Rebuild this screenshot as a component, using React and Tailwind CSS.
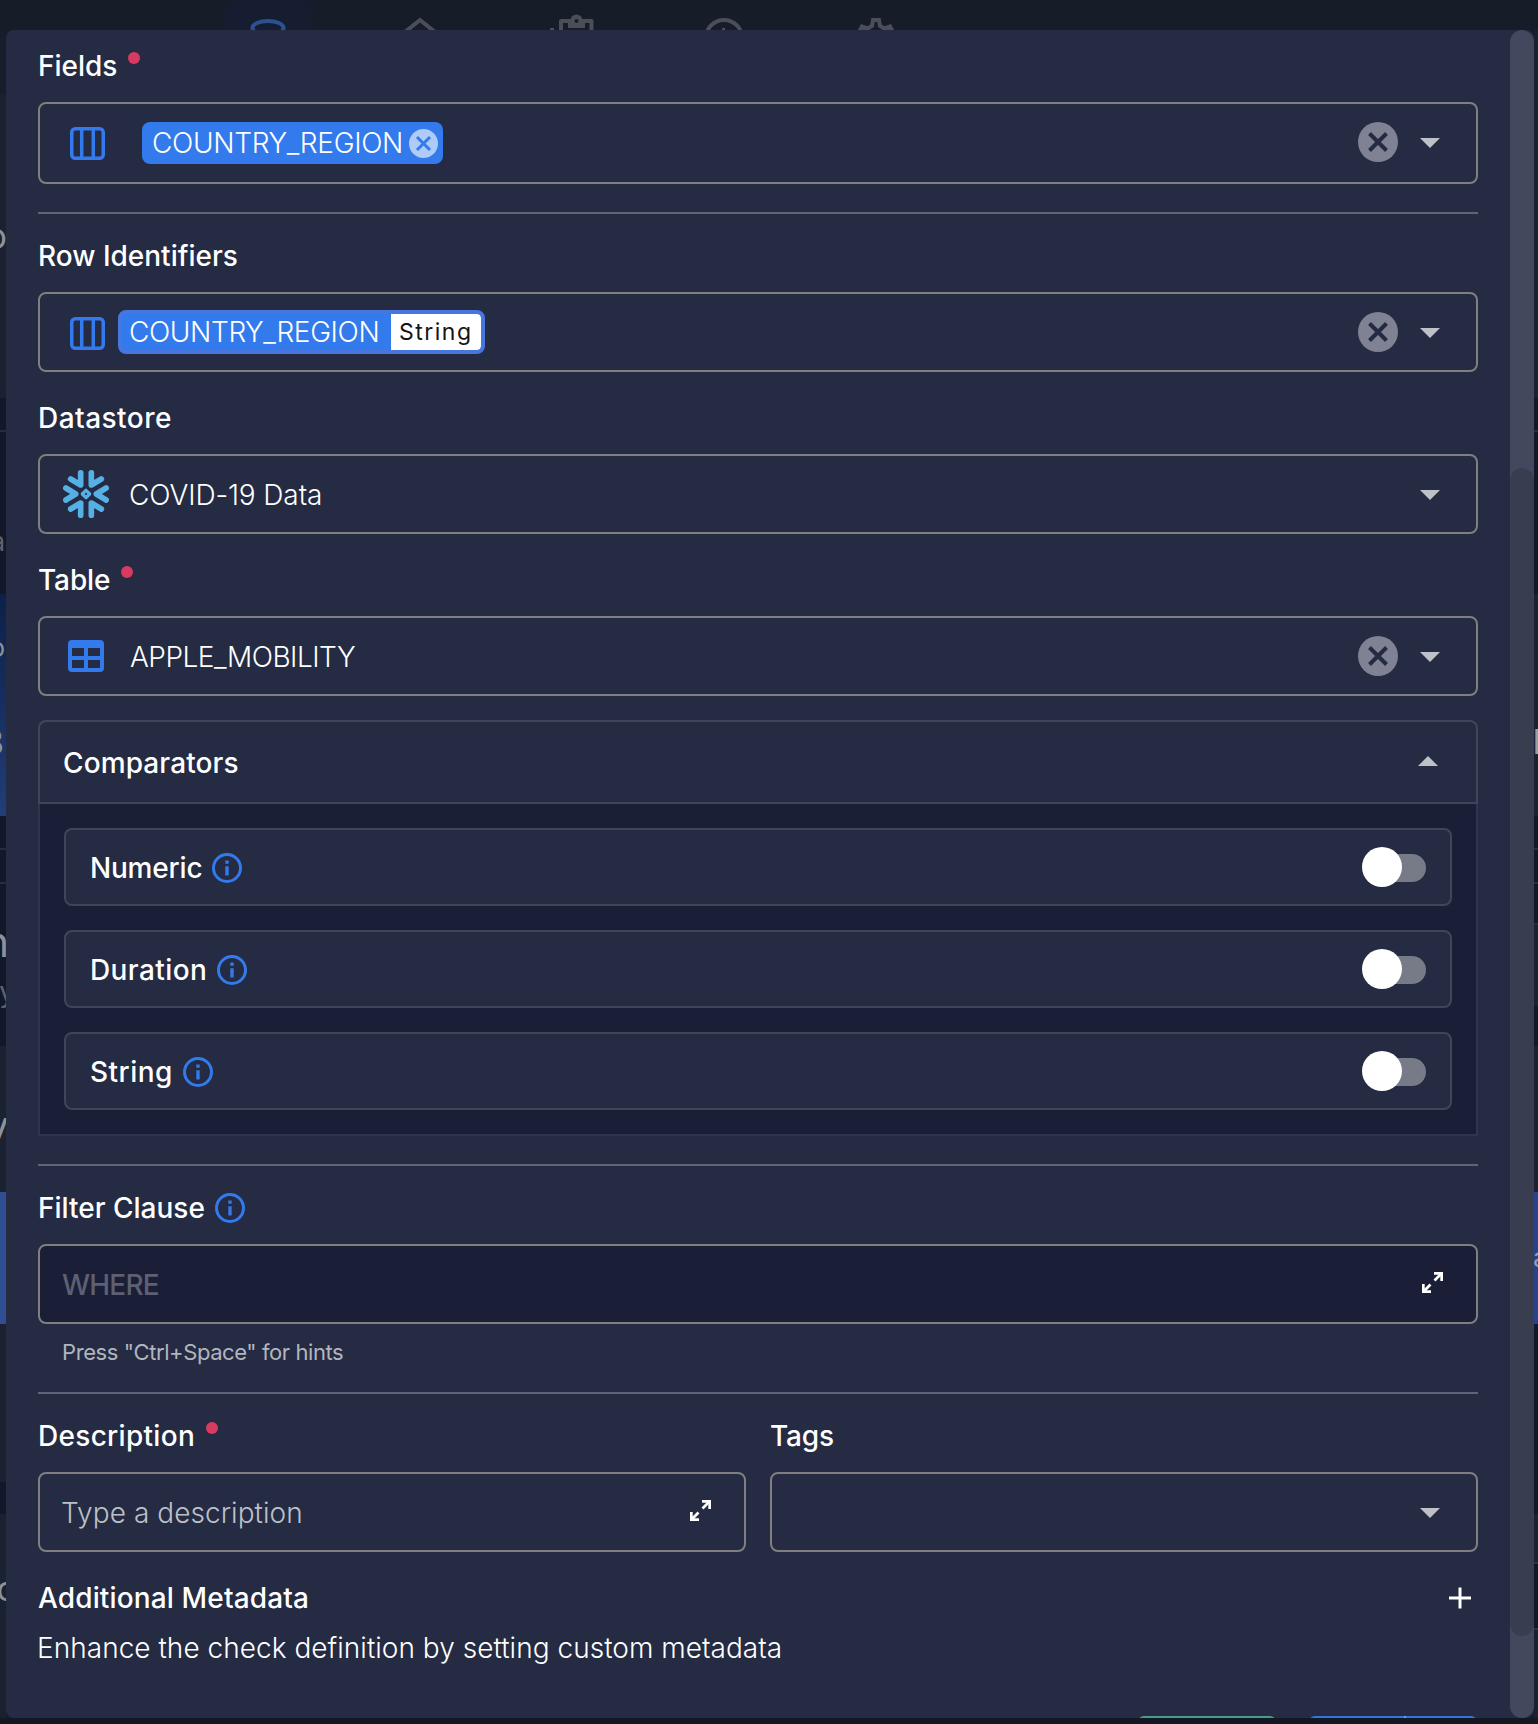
import React from "react";

const leftBands = [
  ["h-[94px]", "bg-[#171d2a]"],
  ["h-[304px]", "bg-[#1a2231]"],
  ["h-[32px]", "bg-[#12172a]"],
  ["h-[2px]", "bg-[#272c3c]"],
  ["h-[162px]", "bg-[#12172a]"],
  ["h-[222px]", "bg-linear-to-b from-[#0c2149] to-[#213e78]"],
  ["h-[32px]", "bg-[#12172a]"],
  ["h-[2px]", "bg-[#272c3c]"],
  ["h-[32px]", "bg-[#12172a]"],
  ["h-[2px]", "bg-[#272c3c]"],
  ["h-[162px]", "bg-[#12172a]"],
  ["h-[146px]", "bg-[#1a2231]"],
  ["h-[132px]", "bg-[#2f4f92]"],
  ["h-[158px]", "bg-[#1a2231]"],
  ["h-[32px]", "bg-[#12172a]"],
  ["h-[204px]", "bg-[#1a2231]"],
];

const rightBands = [
  ["h-[398px]", "bg-[#1a2131]"],
  ["h-[32px]", "bg-[#12172a]"],
  ["h-[2px]", "bg-[#272c3c]"],
  ["h-[162px]", "bg-[#12172a]"],
  ["h-[222px]", "bg-[#1a2131]"],
  ["h-[32px]", "bg-[#12172a]"],
  ["h-[2px]", "bg-[#272c3c]"],
  ["h-[32px]", "bg-[#12172a]"],
  ["h-[2px]", "bg-[#272c3c]"],
  ["h-[39px]", "bg-[#12172a]"],
  ["h-[2px]", "bg-[#272c3c]"],
  ["h-[81px]", "bg-[#1a2131]"],
  ["h-[40px]", "bg-[#12172a]"],
  ["h-[146px]", "bg-[#1a2131]"],
  ["h-[132px]", "bg-[#27428a]"],
  ["h-[190px]", "bg-[#12172a]"],
  ["h-[48px]", "bg-[#1a2131]"],
  ["h-[2px]", "bg-[#2b3040]"],
  ["h-[64px]", "bg-[#12172a]"],
  ["h-[2px]", "bg-[#2b3040]"],
  ["h-[88px]", "bg-[#1a2131]"],
];

function Backdrop() {
  return (
    <div className="absolute inset-0 overflow-hidden bg-[#161c28]">
      <div className="absolute inset-y-0 left-0 w-[6px] overflow-hidden text-[#8f9199]">
        {leftBands.map(([h, bg], i) => (
          <div key={i} className={`${h} ${bg}`} />
        ))}
        <span className="absolute -right-[1px] top-[216px] text-[36px] leading-[40px]">o</span>
        <span className="absolute right-[1px] top-[522px] text-[26px] leading-[40px] text-[#5f636d]">a</span>
        <span className="absolute right-[1px] top-[628px] text-[26px] leading-[40px]">o</span>
        <span className="absolute right-[2px] top-[722px] text-[36px] font-medium leading-[40px]">3</span>
        <span className="absolute -right-[3px] top-[922px] text-[42px] leading-[40px]">n</span>
        <span className="absolute -right-[9px] top-[972px] text-[28px] leading-[40px] text-[#5f636d]">y</span>
        <span className="absolute -right-[3px] top-[1106px] text-[40px] leading-[40px]">y</span>
        <span className="absolute -right-[10px] top-[1569px] text-[34px] leading-[40px]">c</span>
      </div>
      <div className="absolute inset-y-0 right-0 w-[4px] overflow-hidden text-[#9b9da4]">
        {rightBands.map(([h, bg], i) => (
          <div key={i} className={`${h} ${bg}`} />
        ))}
        <span className="absolute -left-[2px] top-[712px] text-[46px] font-medium leading-[50px]">r</span>
        <span className="absolute -left-[1px] top-[1238px] text-[26px] leading-[40px]">a</span>
      </div>
      <div className="absolute inset-x-0 top-0 flex h-[30px] overflow-hidden bg-[#161c28] pl-[192px] text-[#4a4e58]">
        <div className="flex w-[152px] justify-center">
          <div className="flex h-[80px] w-[88px] justify-center rounded-t-[12px] bg-[#171d31] text-[#2c5193]">
            <svg width="88" height="40" fill="none" stroke="currentColor" strokeWidth="4">
              <ellipse cx="44" cy="28" rx="15.5" ry="7" />
            </svg>
          </div>
        </div>
        <svg className="shrink-0" width="152" height="40" fill="none" stroke="currentColor" strokeWidth="4">
          <path d="M56 36 L76 20 L96 36" />
        </svg>
        <svg className="shrink-0" width="152" height="40" fill="none" stroke="currentColor" strokeWidth="4">
          <path d="M65 40 V21 H95.500 V40" strokeLinejoin="round" />
          <path d="M72 19 h5 a5.500 5.500 0 0 1 7 0 h5 v9 h-17z" fill="currentColor" stroke="none" />
          <circle cx="80.500" cy="20.500" r="6" fill="currentColor" stroke="none" />
          <circle cx="80.500" cy="21" r="2" fill="#161c28" stroke="none" />
          <path d="M54 30 h4" />
        </svg>
        <svg className="shrink-0" width="152" height="40" fill="none" stroke="currentColor" strokeWidth="4">
          <circle cx="76" cy="38" r="18" />
          <path d="M75.500 28 v10" strokeWidth="3" />
        </svg>
        <svg className="shrink-0" width="152" height="40" fill="none" stroke="currentColor" strokeWidth="4">
          <path d="M57 36 L62 26.500 L67.500 28.500 L72 26 L73 20 H79 L80 26 L84.500 28.500 L90 26.500 L95 36" />
        </svg>
      </div>
      <div className="absolute inset-x-0 bottom-0 h-[6px] bg-[#131825]" />
    </div>
  );
}

function InfoIcon() {
  return (
    <svg className="shrink-0" width="30" height="30" viewBox="0 0 30 30" fill="none" stroke="#337aec" strokeWidth="3">
      <circle cx="15" cy="15" r="13.500" />
      <path d="M15 13.200 V22.600 M15 7.600 V10.800" strokeWidth="3.400" />
    </svg>
  );
}

function ColumnsIcon() {
  return (
    <svg className="shrink-0" width="35" height="33" viewBox="0 0 35 33" fill="none" stroke="#337aec" strokeWidth="3.500">
      <rect x="1.750" y="1.750" width="31.500" height="29.500" rx="3.500" />
      <path d="M11.700 2 V31 M23.300 2 V31" />
    </svg>
  );
}

function TableIcon() {
  return (
    <svg className="shrink-0" width="36" height="32" viewBox="0 0 36 32" fill="#337aec" fillRule="evenodd">
      <path d="M4 0 H32 a4 4 0 0 1 4 4 V28 a4 4 0 0 1 -4 4 H4 a4 4 0 0 1 -4 -4 V4 a4 4 0 0 1 4 -4z M4 8 V16 H16 V8z M20 8 V16 H32 V8z M4 20 V28 H16 V20z M20 20 V28 H32 V20z" />
    </svg>
  );
}

function SnowflakeIcon() {
  return (
    <svg className="shrink-0" width="46" height="48" viewBox="0 0 138 144" fill="none" stroke="#56b0e6" strokeWidth="17" strokeLinecap="round" strokeLinejoin="round">
      <path d="M53 8.500 V45 L23 27" />
      <path d="M85 8.500 V45 L115 27" />
      <path d="M53 135.500 V99 L23 117" />
      <path d="M85 135.500 V99 L115 117" />
      <path d="M8.500 54 L38 72 L8.500 90" />
      <path d="M129.500 54 L100 72 L129.500 90" />
      <path d="M69 61 L80 72 L69 83 L58 72z" strokeWidth="10" />
    </svg>
  );
}

function ClearIcon() {
  return (
    <svg className="shrink-0" width="40" height="40" viewBox="0 0 40 40">
      <circle cx="20" cy="20" r="20" fill="#7f8292" />
      <path d="M11.500 11.500 L28.500 28.500 M28.500 11.500 L11.500 28.500" stroke="#232b43" strokeWidth="4" />
    </svg>
  );
}

function Caret({ up = false }) {
  return (
    <svg className="shrink-0" width="20" height="10" viewBox="0 0 20 10" fill="#bfc1c9">
      <path d={up ? "M0 10 L10 0 L20 10z" : "M0 0 H20 L10 10z"} />
    </svg>
  );
}

function ExpandIcon() {
  return (
    <svg className="mb-[3px] shrink-0" width="21" height="21" viewBox="0 0 21 21" fill="none" stroke="#fff" strokeWidth="2.700">
      <path d="M12 1.350 H19.650 V9" />
      <path d="M19.200 1.800 L12.500 8.500" />
      <path d="M1.350 12 V19.650 H9" />
      <path d="M1.800 19.200 L8.500 12.500" />
    </svg>
  );
}

function Label({ children, className = "", required = false, info = false }) {
  return (
    <div className="flex h-[40px] items-center">
      <span className={`text-[28px] font-medium leading-[40px] ${className}`}>{children}</span>
      {required && <span className="ml-[11px] mt-[6px] size-[12px] self-start rounded-full bg-[#d83a62]" />}
      {info && (
        <span className="ml-[10px] flex">
          <InfoIcon />
        </span>
      )}
    </div>
  );
}

function Box({ children, className = "h-[80px]" }) {
  return <div className={`mt-[16px] flex items-center rounded-[8px] border-2 border-[#807e80] ${className}`}>{children}</div>;
}

function Controls({ clear = false, raised = false }) {
  return (
    <div className="ml-auto flex items-center gap-[22px] pr-[36px]">
      {clear && (
        <span className={raised ? "mb-[2px]" : ""}>
          <ClearIcon />
        </span>
      )}
      <span className={raised ? "" : "mt-[2px]"}>
        <Caret />
      </span>
    </div>
  );
}

function Divider() {
  return <div className="mb-[22px] mt-[28px] h-[2px] bg-[#5f6478]" />;
}

function Comparator({ name, className }) {
  return (
    <div className="flex h-[78px] items-center justify-between rounded-[8px] border-2 border-[#3f455a] bg-[#242b43] pl-[24px] pr-[24px]">
      <div className="mt-[2px]">
        <Label info className={className}>
          {name}
        </Label>
      </div>
      <div className="flex w-[64px] items-center">
        <div className="z-10 size-[40px] shrink-0 rounded-full bg-white" />
        <div className="-ml-[20px] mt-[2px] h-[28px] w-[44px] shrink-0 rounded-r-full bg-[#777b88]" />
      </div>
    </div>
  );
}

export default function App() {
  return (
    <div className="relative h-[1724px] w-[1538px] overflow-hidden font-['Inter',sans-serif] text-white">
      <Backdrop />
      <div className="relative ml-[6px] mt-[30px] flex h-[1688px] w-[1528px] justify-between overflow-hidden rounded-[8px] bg-[#242b43]">
        <main className="ml-[32px] w-[1440px] pt-[16px]">
          <Label required>Fields</Label>
          <Box className="h-[82px]">
            <div className="ml-[30px] flex">
              <ColumnsIcon />
            </div>
            <div className="ml-[37px] flex h-[42px] w-[301px] items-center rounded-[8px] bg-[#337aec] pl-[10px]">
              <span className="w-[262px] whitespace-nowrap text-[28px] font-light leading-[40px] tracking-[-0.33px]">COUNTRY_REGION</span>
              <svg className="-ml-[5px] shrink-0" width="29" height="29" viewBox="0 0 29 29">
                <circle cx="14.500" cy="14.500" r="14.500" fill="#afcbf8" />
                <path d="M8 8 L21 21 M21 8 L8 21" stroke="#337aec" strokeWidth="3" />
              </svg>
            </div>
            <Controls clear raised />
          </Box>

          <Divider />

          <Label>Row Identifiers</Label>
          <Box>
            <div className="ml-[30px] mt-[3px] flex">
              <ColumnsIcon />
            </div>
            <div className="ml-[13px] flex h-[44px] w-[367px] overflow-hidden rounded-[8px] border-4 border-[#4676de] bg-[#337aec]">
              <span className="w-[269px] whitespace-nowrap pl-[7px] text-[28px] font-light leading-[37px] tracking-[-0.38px]">COUNTRY_REGION</span>
              <span className="w-[90px] rounded-r-[4px] bg-white pl-[8px] text-[23px] font-normal leading-[37px] tracking-[1.5px] text-[#151515]">String</span>
            </div>
            <Controls clear />
          </Box>

          <div className="h-[26px]" />
          <Label className="tracking-[0.47px]">Datastore</Label>
          <Box>
            <div className="ml-[23px] flex">
              <SnowflakeIcon />
            </div>
            <span className="ml-[20px] mt-[2px] text-[28px] font-light leading-[40px] tracking-[-0.12px]">COVID-19 Data</span>
            <Controls />
          </Box>

          <div className="h-[26px]" />
          <Label required className="tracking-[-0.12px]">Table</Label>
          <Box>
            <div className="ml-[28px] flex">
              <TableIcon />
            </div>
            <span className="ml-[26px] mt-[2px] text-[28px] font-light leading-[40px] tracking-[-0.5px]">APPLE_MOBILITY</span>
            <Controls clear />
          </Box>

          <section className="mt-[24px]">
            <div className="flex h-[84px] items-center justify-between rounded-t-[8px] border-2 border-[#3f455a] pl-[24px] pr-[38px]">
              <span className="-ml-px mt-[2px] text-[28px] font-medium leading-[40px] tracking-[0.11px]">Comparators</span>
              <span className="mb-[2px]">
                <Caret up />
              </span>
            </div>
            <div className="flex flex-col gap-[24px] border-x-2 border-b-2 border-[#2f354d] bg-[#1a1e37] px-[24px] py-[24px]">
              <Comparator name="Numeric" className="tracking-[-0.2px]" />
              <Comparator name="Duration" className="tracking-[0.4px]" />
              <Comparator name="String" className="tracking-[0.46px]" />
            </div>
          </section>

          <Divider />

          <Label info>Filter Clause</Label>
          <Box className="h-[80px] bg-[#1a1e37]">
            <span className="ml-[22px] mt-[2px] text-[28px] font-medium leading-[40px] tracking-[-0.8px] text-[#5c6072]">WHERE</span>
            <div className="ml-auto mr-[33px] flex">
              <ExpandIcon />
            </div>
          </Box>
          <p className="ml-[24px] mt-[8px] h-[40px] text-[22px] font-normal leading-[40px] tracking-[-0.42px] text-[#b2b5bf]">Press "Ctrl+Space" for hints</p>

          <div className="mb-[22px] mt-[20px] h-[2px] bg-[#5f6478]" />

          <div className="grid grid-cols-2 gap-[24px]">
            <div>
              <Label required className="tracking-[0.3px]">Description</Label>
              <Box>
                <span className="ml-[21px] mt-[2px] text-[28px] font-light leading-[40px] tracking-[0.06px] text-[#bdc0c9]">Type a description</span>
                <div className="ml-auto mr-[33px] flex">
                  <ExpandIcon />
                </div>
              </Box>
            </div>
            <div>
              <Label className="tracking-[-0.16px]">Tags</Label>
              <Box>
                <Controls />
              </Box>
            </div>
          </div>

          <div className="mt-[26px] flex items-center justify-between pr-[7px]">
            <Label className="tracking-[0.14px]">Additional Metadata</Label>
            <svg width="22" height="22" viewBox="0 0 22 22" stroke="#fff" strokeWidth="3">
              <path d="M11 0.500 V21.500 M0 11 H22" />
            </svg>
          </div>
          <p className="-ml-px mt-[10px] text-[28px] font-[350] leading-[40px] tracking-[0.03px]">Enhance the check definition by setting custom metadata</p>

          <div className="mt-[48px] flex justify-end gap-[33px] pr-px">
            <div className="h-[72px] w-[138px] shrink-0 rounded-[6px] bg-[#4b9a8c]" />
            <div className="flex h-[72px] w-[168px] shrink-0 overflow-hidden rounded-[6px] bg-[#3474dc]">
              <div className="w-[97px] border-r-2 border-[#6b99e6]" />
            </div>
          </div>
        </main>
        <div className="w-[24px] overflow-hidden rounded-full bg-[#43485e] pt-[438px]">
          <div className="h-[1168px] rounded-full bg-[#393d50]" />
        </div>
      </div>
    </div>
  );
}
